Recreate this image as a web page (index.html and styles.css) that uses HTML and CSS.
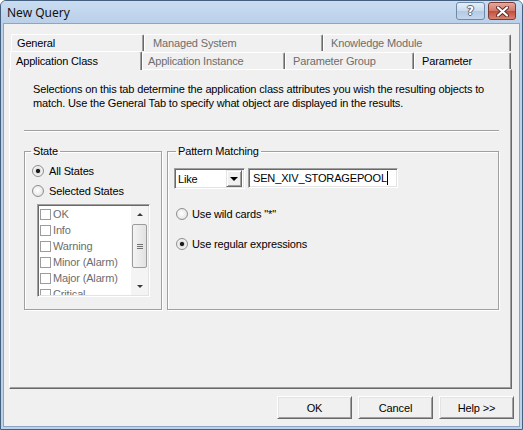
FILE: index.html
```html
<!DOCTYPE html>
<html lang="en">
<head>
  <meta charset="UTF-8">
  <title>New Query</title>
  <link rel="stylesheet" href="styles.css">
</head>
<body>
  <div class="window">
    <div class="titlebar">
      <span class="title">New Query</span>
      <div class="caption-btns">
        <span class="cbtn help">?</span>
        <span class="cbtn close">
          <svg width="13" height="11" viewBox="0 0 13 11">
            <path d="M2 1.5 L11 9.5 M11 1.5 L2 9.5" stroke="#5a2a26" stroke-width="4" stroke-linecap="round"/>
            <path d="M2 1.5 L11 9.5 M11 1.5 L2 9.5" stroke="#fff" stroke-width="2.2" stroke-linecap="round"/>
          </svg>
        </span>
      </div>
    </div>

    <div class="client">
      <div class="tabs">
        <div class="tabrow back">
          <div class="tab t-general">General</div>
          <div class="tab t-managed off">Managed System</div>
          <div class="tab t-knowledge off">Knowledge Module</div>
        </div>
        <div class="tabrow front">
          <div class="tab t-appclass selected">Application Class</div>
          <div class="tab t-appinst off">Application Instance</div>
          <div class="tab t-pgroup off">Parameter Group</div>
          <div class="tab t-param">Parameter</div>
        </div>

        <div class="panel">
          <p class="desc">Selections on this tab determine the application class attributes you wish the resulting objects to match. Use the General Tab to specify what object are displayed in the results.</p>
          <div class="sep"></div>

          <div class="groups">
            <fieldset class="group state">
              <legend>State</legend>
              <div class="radio"><span class="rb on"></span>All States</div>
              <div class="radio"><span class="rb"></span>Selected States</div>
              <div class="listbox">
                <div class="items">
                  <div class="item"><span class="cb"></span>OK</div>
                  <div class="item"><span class="cb"></span>Info</div>
                  <div class="item"><span class="cb"></span>Warning</div>
                  <div class="item"><span class="cb"></span>Minor (Alarm)</div>
                  <div class="item"><span class="cb"></span>Major (Alarm)</div>
                  <div class="item"><span class="cb"></span>Critical</div>
                </div>
                <div class="scrollbar">
                  <div class="arrow up"></div>
                  <div class="thumb"><span class="grip"></span></div>
                  <div class="track"></div>
                  <div class="arrow down"></div>
                </div>
              </div>
            </fieldset>

            <fieldset class="group pattern">
              <legend>Pattern Matching</legend>
              <div class="match-row">
                <div class="combo">
                  <span class="combo-text">Like</span>
                  <span class="combo-btn"><span class="tri"></span></span>
                </div>
                <div class="field"><span class="caret">SEN_XIV_STORAGEPOOL</span></div>
              </div>
              <div class="radio small first"><span class="rb"></span>Use wild cards "*"</div>
              <div class="radio small second"><span class="rb on"></span>Use regular expressions</div>
            </fieldset>
          </div>
        </div>
      </div>

      <div class="buttons">
        <div class="btn">OK</div>
        <div class="btn">Cancel</div>
        <div class="btn">Help &gt;&gt;</div>
      </div>
    </div>
  </div>
</body>
</html>
```

FILE: styles.css
```css
html, body {
  margin: 0;
  padding: 0;
  background: #ffffff;
}
body {
  font-family: "Liberation Sans", Arial, sans-serif;
  font-size: 11px;
  letter-spacing: -0.15px;
  color: #000;
}
.window {
  width: 523px;
  height: 430px;
  box-sizing: border-box;
  border: 1px solid #44607e;
  border-radius: 6px 6px 0 0;
  background: #bcd2ea;
  padding: 0 2px 2px 2px;
  display: flex;
  flex-direction: column;
}
.titlebar {
  height: 22px;
  display: flex;
  align-items: center;
  justify-content: space-between;
  background: linear-gradient(#c9dcf1, #bad0e9);
  margin: 0 -2px;
  padding: 0 6px 0 6px;
  border-radius: 5px 5px 0 0;
}
.title {
  font-family: "Noto Sans", "Open Sans", sans-serif;
  font-size: 12px;
  letter-spacing: 0;
  color: #111;
  margin-top: 1px;
}
.caption-btns {
  display: flex;
  gap: 3px;
  align-self: flex-start;
  margin-top: 1px;
}
.cbtn {
  height: 18px;
  box-sizing: border-box;
  border-radius: 3px;
  display: flex;
  align-items: center;
  justify-content: center;
}
.help {
  width: 29px;
  border: 1px solid #6f8aa8;
  background: linear-gradient(#e4eef9, #c9daed 50%, #b4c9e2 51%, #c4d7ee);
  color: #fff;
  font-family: "DejaVu Sans", sans-serif;
  font-weight: bold;
  font-size: 12px;
  text-shadow: 1px 0 0 #55667a, -1px 0 0 #55667a, 0 1px 0 #55667a, 0 -1px 0 #55667a;
}
.close {
  width: 28px;
  border: 1px solid #7d3a33;
  background: linear-gradient(#e7a89e, #d37767 50%, #c44c3a 51%, #d9826f);
}
.client {
  flex: 1;
  background: #f0f0f0;
  border: 1px solid #8ba6c4;
  display: flex;
  flex-direction: column;
}
.tabs {
  margin: 10px 0 0 5px;
  width: 503px;
}
.tabrow {
  display: flex;
  align-items: flex-end;
}
.tabrow.back {
  margin-left: 2px;
  height: 17px;
}
.tabrow.front {
  margin-left: 1px;
  height: 18px;
}
.tab {
  box-sizing: border-box;
  height: 17px;
  border-top: 1px solid #fff;
  border-left: 1px solid #fff;
  border-right: 1px solid #696969;
  box-shadow: inset -1px 0 0 #a0a0a0;
  border-radius: 2px 2px 0 0;
  padding-left: 5px;
  line-height: 16px;
  white-space: nowrap;
  background: #f0f0f0;
}
.tab.off {
  color: #6d6d6d;
}
.front .tab {
  height: 17px;
}
.front .tab.selected {
  height: 19px;
  margin-bottom: -1px;
  position: relative;
  z-index: 1;
  line-height: 18px;
}
.t-general { width: 133px; }
.t-managed { width: 179px; padding-left: 8px; }
.t-knowledge { width: 188px; padding-left: 7px; }
.t-appclass { width: 132px; }
.t-appinst { width: 143px; padding-left: 5px; }
.t-pgroup { width: 129px; padding-left: 7px; }
.t-param { width: 97px; padding-left: 7px; }

.panel {
  box-sizing: border-box;
  height: 320px;
  border-top: 1px solid #fff;
  border-left: 1px solid #fff;
  border-right: 1px solid #696969;
  border-bottom: 1px solid #696969;
  box-shadow: inset -1px -1px 0 #a0a0a0;
}
.desc {
  margin: 12px 0 0 23px;
  width: 476px;
  line-height: 14px;
}
.sep {
  margin: 20px 0 0 14px;
  width: 475px;
  border-top: 1px solid #a0a0a0;
  border-bottom: 1px solid #fff;
}
.groups {
  display: flex;
  gap: 5px;
  margin: 12px 0 0 14px;
}
.group {
  margin: 0;
  box-sizing: border-box;
  height: 166px;
  min-width: 0;
  border: 1px solid #a0a0a0;
  box-shadow: inset 1px 1px 0 #fff, 1px 1px 0 #fff;
}
.group legend {
  padding: 0 2px;
  line-height: 14px;
}
.state {
  width: 138px;
  padding: 3px 0 0 7px;
}
.state legend {
  margin-left: -1px;
}
.pattern {
  width: 332px;
  padding: 10px 0 0 6px;
}
.pattern legend {
  margin-left: 2px;
}
.radio {
  display: flex;
  align-items: center;
  gap: 5px;
  height: 20px;
}
.rb {
  width: 12px;
  height: 12px;
  box-sizing: border-box;
  border-radius: 50%;
  border: 1px solid #8e8f8f;
  background: radial-gradient(circle at 45% 45%, #ffffff 0, #f2f2f2 40%, #d6d6d6 100%);
}
.rb.on {
  background: radial-gradient(circle, #1c1c1c 0, #1c1c1c 1.8px, #d8d8d8 2.4px, #f4f4f4 60%, #d6d6d6 100%);
}
.radio.small {
  height: 16px;
  padding-left: 2px;
  gap: 4px;
}
.radio.first {
  margin-top: 17px;
}
.radio.second {
  margin-top: 14px;
}
.listbox {
  margin: 3px 0 0 5px;
  width: 113px;
  height: 93px;
  box-sizing: border-box;
  border: 1px solid;
  border-color: #a0a0a0 #fff #fff #a0a0a0;
  box-shadow: inset 1px 1px 0 #696969, inset -1px -1px 0 #e3e3e3;
  background: #fff;
  padding: 1px;
  display: flex;
  overflow: hidden;
}
.items {
  flex: 1;
  overflow: hidden;
  padding-left: 1px;
}
.item {
  height: 16px;
  display: flex;
  align-items: center;
  color: #6d6d6d;
  white-space: nowrap;
}
.cb {
  width: 11px;
  height: 11px;
  box-sizing: border-box;
  border: 1px solid #9c9c9c;
  background: #fff;
  margin-right: 2px;
}
.scrollbar {
  width: 17px;
  display: flex;
  flex-direction: column;
  background: #f4f4f4;
}
.arrow {
  height: 17px;
  display: flex;
  align-items: center;
  justify-content: center;
}
.arrow::after {
  content: "";
  border-left: 3px solid transparent;
  border-right: 3px solid transparent;
}
.arrow.up::after {
  border-bottom: 3px solid #3a3a3a;
}
.arrow.down::after {
  border-top: 3px solid #3a3a3a;
}
.thumb {
  height: 44px;
  margin: 1px 1px 0 1px;
  box-sizing: border-box;
  border: 1px solid #9c9c9c;
  border-radius: 2px;
  background: linear-gradient(to right, #f3f3f3, #e2e2e2);
  display: flex;
  align-items: center;
  justify-content: center;
}
.grip {
  width: 6px;
  height: 5px;
  border-top: 1px solid #707070;
  border-bottom: 1px solid #707070;
  box-sizing: border-box;
  background: linear-gradient(#707070, #707070) center / 100% 1px no-repeat;
}
.track {
  flex: 1;
}
.match-row {
  display: flex;
  gap: 3px;
}
.combo {
  width: 71px;
  height: 21px;
  box-sizing: border-box;
  border: 1px solid;
  border-color: #a0a0a0 #fff #fff #a0a0a0;
  box-shadow: inset 1px 1px 0 #696969, inset -1px -1px 0 #e3e3e3;
  background: #fff;
  display: flex;
  align-items: center;
  justify-content: space-between;
  padding: 0 2px 0 3px;
}
.combo-btn {
  width: 16px;
  height: 17px;
  box-sizing: border-box;
  background: #f0f0f0;
  border: 1px solid;
  border-color: #e3e3e3 #696969 #696969 #e3e3e3;
  box-shadow: inset 1px 1px 0 #fff, inset -1px -1px 0 #a0a0a0;
  display: flex;
  align-items: center;
  justify-content: center;
}
.tri {
  border-left: 4px solid transparent;
  border-right: 4px solid transparent;
  border-top: 4px solid #000;
}
.field {
  width: 150px;
  height: 20px;
  box-sizing: border-box;
  border: 1px solid;
  border-color: #a0a0a0 #fff #fff #a0a0a0;
  box-shadow: inset 1px 1px 0 #696969, inset -1px -1px 0 #e3e3e3;
  background: #fff;
  display: flex;
  align-items: center;
  padding-left: 4px;
}
.caret {
  border-right: 1px solid #000;
  line-height: 14px;
}
.buttons {
  display: flex;
  justify-content: flex-end;
  gap: 6px;
  margin: 7px 5px 0 0;
}
.btn {
  width: 75px;
  height: 23px;
  box-sizing: border-box;
  border: 1px solid;
  border-color: #fff #696969 #696969 #fff;
  box-shadow: inset 1px 1px 0 #e3e3e3, inset -1px -1px 0 #a0a0a0;
  background: #f0f0f0;
  display: flex;
  align-items: center;
  justify-content: center;
}
```
